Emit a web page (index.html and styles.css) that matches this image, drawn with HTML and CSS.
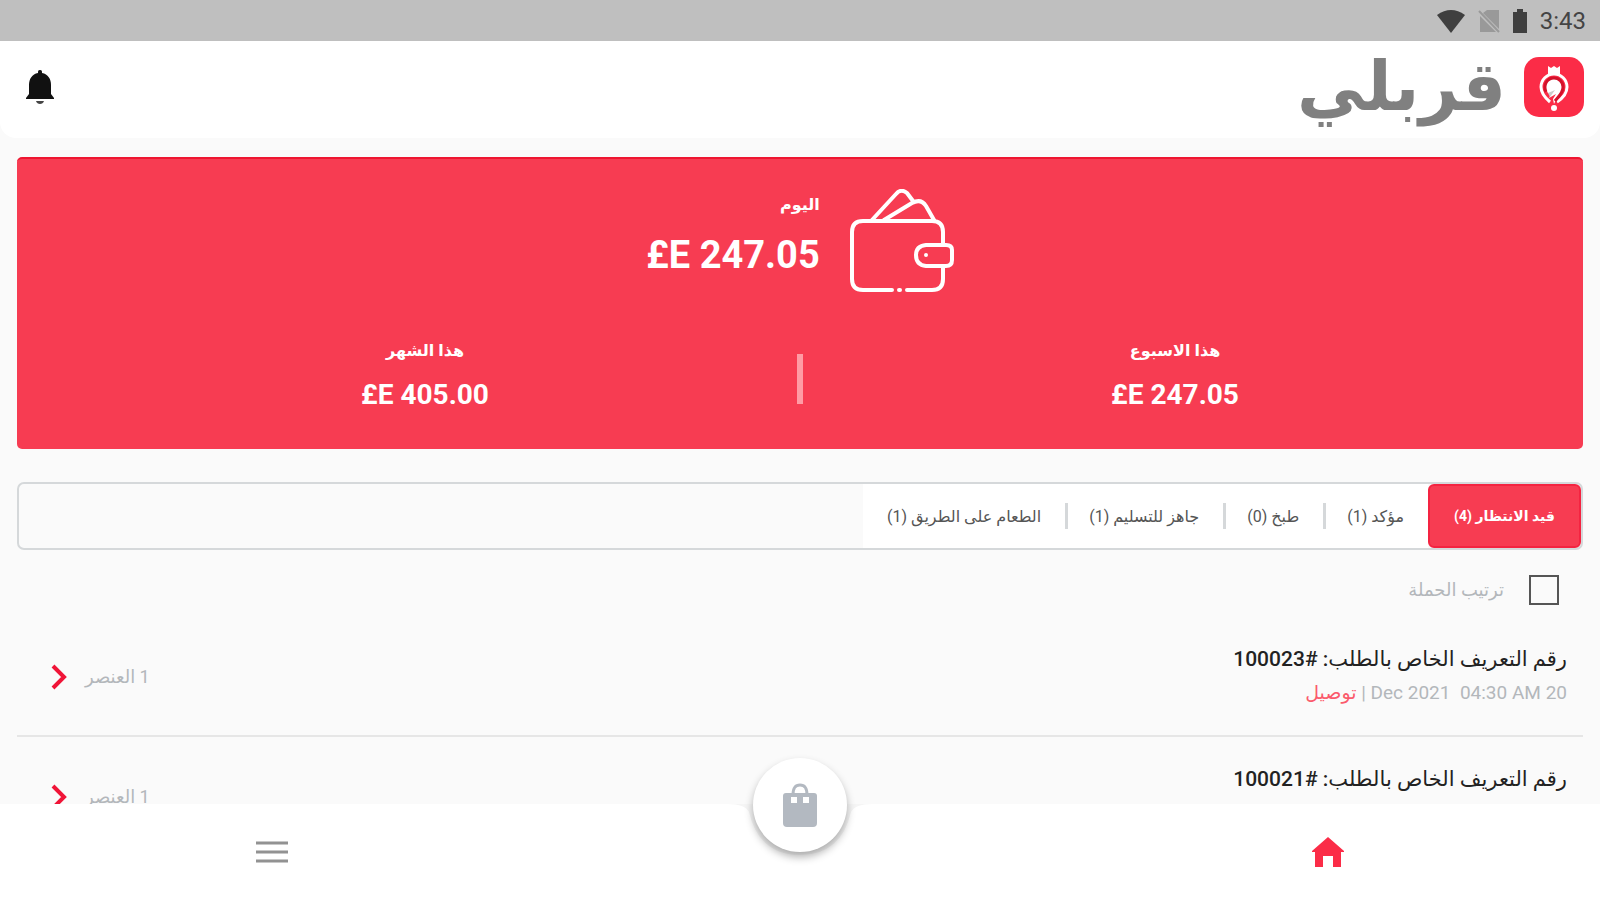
FILE: index.html
```html
<!DOCTYPE html>
<html lang="ar" dir="rtl">
<head>
  <meta charset="utf-8">
  <title>قربلي</title>
  <link rel="stylesheet" href="styles.css">
</head>
<body>
  <div class="status-bar">
    <span class="clock">3:43</span>
    <svg width="16" height="24" viewBox="0 0 16 24"><path fill="#3f3f3f" d="M5 0h6v3h4v21H1V3h4z"/></svg>
    <svg class="sim" width="22" height="24" viewBox="0 0 22 24"><path fill="#999" d="M9 1h12v19L5 4zM2 7l16 16H2z"/><path stroke="#999" stroke-width="2" d="M1 2l20 21"/></svg>
    <svg width="30" height="24" viewBox="0 0 30 24"><path fill="#3f3f3f" d="M1 6Q15-4 29 6L15 24z"/></svg>
  </div>

  <header class="header">
    <a class="brand" href="#">
      <svg width="60" height="60" viewBox="0 0 60 60">
        <rect width="60" height="60" rx="15" fill="#fb2c47"/>
        <path fill="#fff" d="M24 9l3 2 3-2 3 2 3-2v9H24z"/>
        <path fill="none" stroke="#fff" stroke-width="3" d="M26 45C19 39 17 35 17 30a13 13 0 0 1 26 0c0 6-4 11-10 15"/>
        <path fill="#fff" d="M30 21c5 0 9 4 9 9 0 6-6 10-9 17l-1-5 3-5-7 4 2-4c-4-1-6-4-6-7 0-5 4-9 9-9z"/>
        <path fill="none" stroke="#d3122b" stroke-width="3" d="M22 35c-3-7 1-14 8-14 5 0 9 4 9 9 0 6-4 9-8 14"/>
        <path fill="#ccc" d="M24 36l7-3-5 7z"/>
        <circle cx="30" cy="51" r="3" fill="#fff"/>
      </svg>
      <span class="brand-name">قربلي</span>
    </a>
    <button class="bell" aria-label="الإشعارات">
      <svg width="28" height="34" viewBox="0 0 28 34"><path fill="#111" d="M14 0c2 0 2 1 2 3 6 1 9 6 9 12v9l3 4v1H0v-1l3-4v-9C3 9 6 4 12 3c0-2 0-3 2-3z"/><path fill="#444" d="M10 31h8c-1 4-7 4-8 0z"/></svg>
    </button>
  </header>

  <main class="content">
    <section class="earnings">
      <div class="today">
        <svg width="104" height="104" viewBox="0 0 104 104" fill="none" stroke="#fff" stroke-width="4" stroke-linecap="round" stroke-linejoin="round">
          <path d="M42 101H13Q2 101 2 90V43Q2 32 13 32H82Q93 32 93 43V55M93 77V90Q93 101 82 101H57"/>
          <path d="M49 101h1"/>
          <path d="M22 31L46 5Q51-1 57 4L63 12M34 31L62 14Q71 9 76 17L84 31"/>
          <path d="M76 56H96Q102 56 102 61V71Q102 77 96 77H76Q66 76 66 66Q66 57 76 56z"/>
          <circle cx="76" cy="66" r="1" stroke-width="2"/>
        </svg>
        <div class="today-text">
          <span class="label">اليوم</span>
          <strong class="amount amount-big" dir="ltr">£E 247.05</strong>
        </div>
      </div>
      <div class="periods">
        <div class="period">
          <span class="label">هذا الاسبوع</span>
          <strong class="amount" dir="ltr">£E 247.05</strong>
        </div>
        <div class="divider"></div>
        <div class="period">
          <span class="label">هذا الشهر</span>
          <strong class="amount" dir="ltr">£E 405.00</strong>
        </div>
      </div>
    </section>

    <div class="tabs">
      <button class="tab active">قيد الانتظار (4)</button>
      <button class="tab">مؤكد (1)</button>
      <button class="tab">طبخ (0)</button>
      <button class="tab">جاهز للتسليم (1)</button>
      <button class="tab">الطعام على الطريق (1)</button>
    </div>

    <label class="campaign">
      <input type="checkbox">
      <span>ترتيب الحملة</span>
    </label>

    <ul class="orders">
      <li class="order">
        <div>
          <h2>رقم التعريف الخاص بالطلب: #100023</h2>
          <p>20 Dec 2021&nbsp; 04:30 AM | <span class="type">توصيل</span></p>
        </div>
        <a class="items" href="#">
          <span>1 العنصر</span>
          <svg width="16" height="26" viewBox="0 0 16 26"><path fill="none" stroke="#f01437" stroke-width="4" d="M2 2l11 11L2 24"/></svg>
        </a>
      </li>
      <li class="order">
        <div>
          <h2>رقم التعريف الخاص بالطلب: #100021</h2>
        </div>
        <a class="items" href="#">
          <span>1 العنصر</span>
          <svg width="16" height="26" viewBox="0 0 16 26"><path fill="none" stroke="#f01437" stroke-width="4" d="M2 2l11 11L2 24"/></svg>
        </a>
      </li>
    </ul>
  </main>

  <nav class="bottom-nav">
    <a class="nav-item" href="#" aria-label="الرئيسية">
      <svg width="32" height="30" viewBox="0 0 32 30"><path fill="#fb2c47" d="M16 0l16 14v1h-3v15h-8V19H11v11H3V15H0v-1z"/></svg>
    </a>
    <div class="nav-center">
      <svg class="notch" width="144" height="52" viewBox="0 0 144 52"><path fill="#f5f5f5" d="M0 0Q17 0 21 8Q31 51 72 51Q113 51 123 8Q127 0 144 0z"/></svg>
      <button class="fab" aria-label="الطلبات">
        <svg width="34" height="44" viewBox="0 0 34 44"><path fill="#b3b9c1" d="M3 10h28q3 0 3 3v27q0 4-4 4H4q-4 0-4-4V13q0-3 3-3z"/><path fill="none" stroke="#b3b9c1" stroke-width="3" d="M10 12C10 5 12 2 17 2s7 3 7 10"/><path fill="#fff" d="M8 14h6v6H8zM20 14h6v6h-6z"/></svg>
      </button>
    </div>
    <a class="nav-item" href="#" aria-label="القائمة">
      <svg width="32" height="24" viewBox="0 0 32 24"><path stroke="#929292" stroke-width="3" d="M0 3h32M0 12h32M0 21h32"/></svg>
    </a>
  </nav>
</body>
</html>
```
FILE: styles.css
```css
* {
  box-sizing: border-box;
}
body {
  display: flex;
  flex-direction: column;
  height: 100vh;
  margin: 0;
  overflow: hidden;
  background-color: #fafafa;
  color: #333;
  font-family: Roboto, "DejaVu Sans", sans-serif;
}
button {
  padding: 0;
  border: none;
  background: none;
  font-family: inherit;
  cursor: pointer;
}
a {
  color: inherit;
  text-decoration: none;
}
svg {
  display: block;
}
.status-bar {
  display: flex;
  flex: none;
  align-items: center;
  gap: 12px;
  height: 41px;
  padding: 0 14px;
  background-color: #bfbfbf;
}
.clock {
  color: #444;
  font-size: 24px;
}
.header {
  display: flex;
  flex: none;
  align-items: center;
  justify-content: space-between;
  height: 97px;
  padding: 0 16px 6px 26px;
  background-color: #fff;
  border-radius: 0 0 16px 16px;
}
.brand {
  display: flex;
  align-items: center;
  gap: 18px;
}
.brand-name {
  color: #808080;
  font-family: "DejaVu Sans", sans-serif;
  font-size: 68px;
  font-weight: bold;
  line-height: 80px;
}
.content {
  flex: 1;
  min-height: 0;
  padding: 19px 17px 0;
  overflow: hidden;
}
.earnings {
  height: 292px;
  padding: 30px 36px 0;
  background-color: #f73c52;
  border-top: 2px solid #ee1530;
  border-radius: 5px;
  color: #fff;
}
.today {
  display: flex;
  justify-content: center;
  gap: 30px;
}
.today-text {
  display: flex;
  flex-direction: column;
  gap: 16px;
}
.label {
  font-size: 16px;
  font-weight: bold;
  line-height: 32px;
}
.amount {
  font-size: 28px;
  line-height: 36px;
}
.amount-big {
  font-size: 38px;
}
.periods {
  display: flex;
  align-items: center;
  padding-top: 42px;
}
.period {
  display: flex;
  flex: 1;
  flex-direction: column;
  align-items: center;
  gap: 10px;
}
.divider {
  width: 6px;
  height: 50px;
  margin-top: 10px;
  background-color: #ff9ba5;
}
.tabs {
  display: flex;
  height: 68px;
  margin-top: 33px;
  border: 2px solid #d5d8da;
  border-radius: 7px;
}
.tab {
  position: relative;
  padding: 0 24px;
  background-color: #fff;
  color: #555;
  font-size: 16px;
}
.tab.active {
  background-color: #f73c52;
  border: 2px solid #f42441;
  border-radius: 6px;
  color: #fff;
  font-size: 14px;
  font-weight: bold;
}
.tab:not(.active):not(:last-child)::after {
  content: "";
  position: absolute;
  top: 19px;
  left: 0;
  width: 3px;
  height: 26px;
  background-color: #d5d8da;
}
.campaign {
  display: flex;
  align-items: center;
  gap: 25px;
  width: max-content;
  margin: 25px 24px 0;
  color: #b3b7bb;
  font-size: 18px;
  line-height: 30px;
}
.campaign input {
  appearance: none;
  width: 30px;
  height: 30px;
  margin: 0;
  border: 2px solid #555;
}
.orders {
  margin: 0;
  padding: 0;
  list-style: none;
}
.order {
  display: flex;
  align-items: flex-start;
  justify-content: space-between;
  height: 120px;
  padding: 24px 16px 0 34px;
  border-bottom: 2px solid #e6e6e6;
}
.order:first-child {
  height: 132px;
  padding-top: 36px;
}
.order h2 {
  margin: 0;
  color: #222;
  font-size: 21px;
  font-weight: 500;
  line-height: 36px;
}
.order p {
  margin: 0;
  color: #b3b7bb;
  font-size: 19px;
  line-height: 32px;
}
.type {
  color: #fb5a6c;
}
.items {
  display: flex;
  align-items: center;
  gap: 18px;
  padding-top: 18px;
  color: #b3b7bb;
  font-size: 18px;
  line-height: 36px;
}
.bottom-nav {
  display: grid;
  flex: none;
  grid-template-columns: 34% 32% 34%;
  height: 96px;
  background-color: #fff;
}
.nav-item {
  display: flex;
  align-items: center;
  justify-content: center;
}
.nav-center {
  position: relative;
}
.notch {
  position: absolute;
  top: 0;
  left: calc(50% - 72px);
}
.fab {
  position: absolute;
  top: -46px;
  left: calc(50% - 47px);
  display: flex;
  align-items: center;
  justify-content: center;
  width: 94px;
  height: 94px;
  background-color: #fff;
  border-radius: 50%;
  box-shadow: 0 5px 8px rgba(0, 0, 0, 0.3);
}
```
